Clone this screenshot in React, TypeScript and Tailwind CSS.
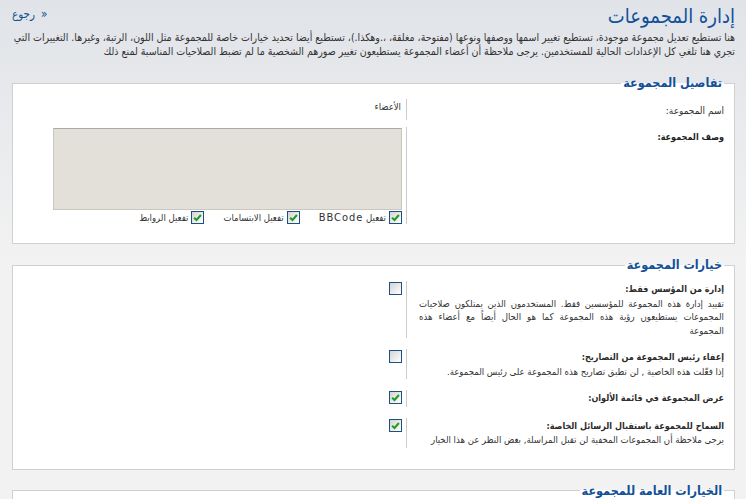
import React from "react";

const CheckBox: React.FC<{ checked?: boolean }> = ({ checked }) => (
  <span className="inline-flex h-[13px] w-[13px] shrink-0 items-center justify-center border border-[#1d4f84] bg-linear-to-br from-[#d4d4d4] to-white">
    {checked && (
      <svg viewBox="0 0 10 10" className="h-[9px] w-[9px]">
        <path d="M1.2 5.2 L3.9 7.8 L8.8 2.2" fill="none" stroke="#1e9e1e" strokeWidth={2.2} />
      </svg>
    )}
  </span>
);

interface OptionRowProps {
  title: string;
  explain?: string;
  checked?: boolean;
}

const OptionRow: React.FC<OptionRowProps> = ({ title, explain, checked }) => (
  <div className="flex items-stretch">
    <div className="w-[318px] shrink-0 border-l border-[#cccccc] pl-[12px] pt-[2px] pb-[1px]">
      <div className="text-[9px] font-bold text-[#2b2b2b]">{title}</div>
      {explain && <div className="text-justify text-[9.5px] text-[#333]">{explain}</div>}
    </div>
    <div className="pr-[4px] pt-[1px]">
      <CheckBox checked={checked} />
    </div>
  </div>
);

const Legend: React.FC<{ children: React.ReactNode }> = ({ children }) => (
  <legend className="px-[2px] text-[12.5px] leading-[16px] font-bold text-[#115098]">{children}</legend>
);

export default function App() {
  return (
    <div
      dir="rtl"
      className="min-h-[499px] overflow-hidden bg-[linear-gradient(to_bottom,#e0e3e8_0px,#f2f2f2_260px)] pl-[12px] pr-[11px] font-['DejaVu_Sans_Condensed','DejaVu_Sans',sans-serif] text-[10.5px] leading-[13.5px] text-[#333]"
    >
      {/* Header */}
      <div className="flex items-start justify-between pt-[4px]">
        <h1 className="text-[20px] leading-[25px] font-normal text-[#115098]">إدارة المجموعات</h1>
        <a dir="ltr" className="mt-[4px] flex items-center gap-[6px] text-[11.5px] tracking-[1px] text-[#105289]">
          <span>رجوع</span>
          <span>»</span>
        </a>
      </div>
      <p className="mt-[2px] text-[#333]">
        هنا تستطيع تعديل مجموعة موجودة، تستطيع تغيير اسمها ووصفها ونوعها (مفتوحة، مغلقة، ،.وهكذا.)، تستطيع أيضا تحديد خيارات خاصة للمجموعة مثل اللون، الرتبة، وغيرها. التغييرات التي تجري هنا تلغي كل الإعدادات الحالية للمستخدمين. يرجى ملاحظة أن أعضاء المجموعة يستطيعون تغيير صورهم الشخصية ما لم تضبط الصلاحيات المناسبة لمنع ذلك
      </p>

      {/* Group details */}
      <fieldset className="mt-[17px] border border-[#d0d0d0] bg-white pr-[10px] pb-[19px] pt-[8px]">
        <Legend>تفاصيل المجموعة</Legend>
        <div className="flex items-stretch">
          <div className="w-[318px] shrink-0 border-l border-[#cccccc] pt-[5px] pb-[2px] text-[10px]">اسم المجموعة:</div>
          <div className="pr-[5px] pt-[1px] text-[9.5px]">الأعضاء</div>
        </div>
        <div className="mt-[7px] flex items-stretch">
          <div className="w-[318px] shrink-0 border-l border-[#cccccc] pt-[4px] text-[9px] font-bold text-[#222]">وصف المجموعة:</div>
          <div className="pr-[4px] pt-[1px]">
            <div className="h-[82px] w-[349px] border border-[#cbc7c0] border-t-[#a9a9a9] bg-[#e3dfd9]" />
            <div className="mt-[1px] flex items-center gap-x-[19px] text-[9.5px]">
              <label className="flex items-center gap-[3px]">
                <CheckBox checked />
                <span>تفعيل <span className="text-[11px] tracking-[1px]">BBCode</span></span>
              </label>
              <label className="flex items-center gap-[3px]">
                <CheckBox checked />
                <span>تفعيل الابتسامات</span>
              </label>
              <label className="flex items-center gap-[3px]">
                <CheckBox checked />
                <span>تفعيل الروابط</span>
              </label>
            </div>
          </div>
        </div>
      </fieldset>

      {/* Group options */}
      <fieldset className="mt-[13px] border border-[#d0d0d0] bg-white pr-[10px] pb-[21px] pt-[8px]">
        <Legend>خيارات المجموعة</Legend>
        <div className="flex flex-col gap-[11px]">
          <OptionRow
            title="إدارة من المؤسس فقط:"
            explain="تقييد إدارة هذه المجموعة للمؤسسين فقط. المستخدمون الذين يمتلكون صلاحيات المجموعات يستطيعون رؤية هذه المجموعة كما هو الحال أيضاً مع أعضاء هذه المجموعة"
          />
          <OptionRow
            title="إعفاء رئيس المجموعة من التصاريح:"
            explain="إذا فعّلت هذه الخاصية , لن تطبق تصاريح هذه المجموعة على رئيس المجموعة."
          />
          <OptionRow title="عرض المجموعة في قائمة الألوان:" checked />
          <OptionRow
            title="السماح للمجموعة باستقبال الرسائل الخاصة:"
            explain="يرجى ملاحظة أن المجموعات المخفية لن تقبل المراسلة, بغض النظر عن هذا الخيار"
            checked
          />
        </div>
      </fieldset>

      {/* General options */}
      <fieldset className="mt-[13px] h-[80px] border border-[#d0d0d0] bg-white pr-[10px]">
        <Legend>الخيارات العامة للمجموعة</Legend>
      </fieldset>
    </div>
  );
}
